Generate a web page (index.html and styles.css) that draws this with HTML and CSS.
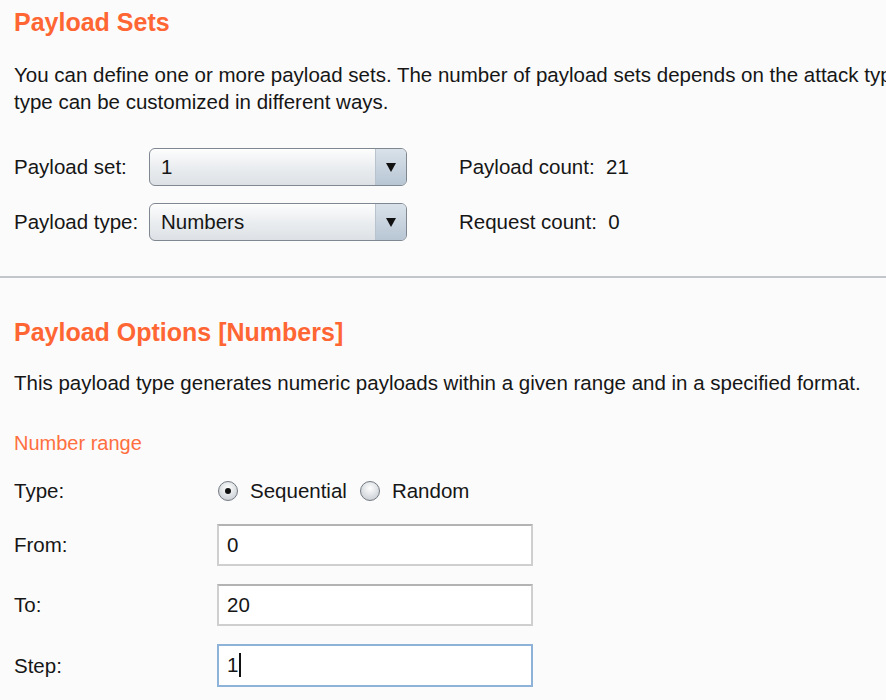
FILE: index.html
```html
<!DOCTYPE html>
<html lang="en">
<head>
  <meta charset="UTF-8" />
  <title>Payload Sets</title>
  <link rel="stylesheet" href="styles.css">
</head>
<body>

  <!-- Payload sets -->
  <section class="panel">
    <h2 class="panel-title">Payload Sets</h2>
    <p class="panel-desc">You can define one or more payload sets. The number of payload sets depends on the attack type<br>type can be customized in different ways.</p>

    <div class="sets-grid">
      <label>Payload set:</label>
      <div class="combo">
        <span class="combo-value">1</span>
        <span class="combo-arrow"></span>
      </div>
      <div class="count">Payload count:&nbsp; 21</div>

      <label>Payload type:</label>
      <div class="combo">
        <span class="combo-value">Numbers</span>
        <span class="combo-arrow"></span>
      </div>
      <div class="count">Request count:&nbsp; 0</div>
    </div>
  </section>

  <hr class="divider">

  <!-- Payload options -->
  <section class="panel panel-options">
    <h2 class="panel-title">Payload Options [Numbers]</h2>
    <p class="panel-desc single">This payload type generates numeric payloads within a given range and in a specified format.</p>

    <h3 class="group-title">Number range</h3>

    <div class="range-grid">
      <label>Type:</label>
      <div class="radios">
        <span class="radio checked"></span><span>Sequential</span>
        <span class="radio"></span><span>Random</span>
      </div>

      <label>From:</label>
      <div class="field">0</div>

      <label>To:</label>
      <div class="field">20</div>

      <label>Step:</label>
      <div class="field focused">1<span class="caret"></span></div>
    </div>
  </section>

</body>
</html>
```

FILE: styles.css
```css
/* ===== base ===== */
*{box-sizing:border-box}
body{
  margin:0;
  background:#fbfbfb;
  color:#161616;
  font-family:"Liberation Sans",Arial,sans-serif;
  font-size:20.5px;
  overflow:hidden;
}

/* ===== panels ===== */
.panel{
  padding:7px 0 0 14px;
}
.panel-title{
  margin:0;
  font-size:25px;
  line-height:30px;
  font-weight:700;
  color:#ff6633;
}
.panel-desc{
  margin:24px 0 0;
  line-height:27px;
  white-space:nowrap;
}
.panel-desc.single{
  margin-top:22px;
}

/* ===== sets rows ===== */
.sets-grid{
  display:grid;
  grid-template-columns:135px 258px auto;
  grid-auto-rows:38px;
  row-gap:17px;
  align-items:center;
  margin-top:33px;
}
.count{
  padding-left:52px;
}

.combo{
  display:flex;
  height:38px;
  border:1px solid #7f8791;
  border-radius:6px;
  background:linear-gradient(#fdfdfd,#e9ecef 55%,#dde1e5);
  box-shadow:inset 0 1px 0 #fff;
  overflow:hidden;
}
.combo-value{
  flex:1;
  padding-left:11px;
  line-height:36px;
}
.combo-arrow{
  position:relative;
  width:31px;
  border-left:1px solid #b9c3cd;
  background:linear-gradient(#d9e2ea,#b8c6d4);
}
.combo-arrow::after{
  content:"";
  position:absolute;
  left:10px;
  top:14px;
  border-left:5px solid transparent;
  border-right:5px solid transparent;
  border-top:9px solid #111;
}

/* ===== divider ===== */
.divider{
  margin:35px 0 0;
  border:0;
  height:2px;
  background:#c3c7cc;
}

/* ===== options ===== */
.panel-options{
  padding-top:39px;
}
.group-title{
  margin:35px 0 0;
  font-size:20px;
  line-height:24px;
  font-weight:400;
  color:#ff6f40;
}

.range-grid{
  display:grid;
  grid-template-columns:203px 316px;
  grid-template-rows:30px 42px 42px 43px;
  row-gap:18px;
  align-items:center;
  margin-top:21px;
}

.radios{
  display:flex;
  align-items:center;
  gap:12px;
  padding-left:1px;
}
.radios .radio + span{margin-right:1px}
.radio{
  position:relative;
  width:20px;
  height:20px;
  border:1px solid #737a82;
  border-radius:50%;
  background:radial-gradient(circle at 50% 35%,#ffffff,#cfd3d8 75%);
}
.radio.checked::after{
  content:"";
  position:absolute;
  left:6px;
  top:6px;
  width:6px;
  height:6px;
  border-radius:50%;
  background:#111;
}

.field{
  height:42px;
  padding-left:8px;
  line-height:38px;
  background:#fff;
  border:2px solid #cfcfcf;
  border-top-color:#b3b3b3;
}
.field.focused{
  height:43px;
  border-color:#8fb2d8;
}
.caret{
  display:inline-block;
  width:2px;
  height:24px;
  margin-left:1px;
  vertical-align:-5px;
  background:#111;
}
```
